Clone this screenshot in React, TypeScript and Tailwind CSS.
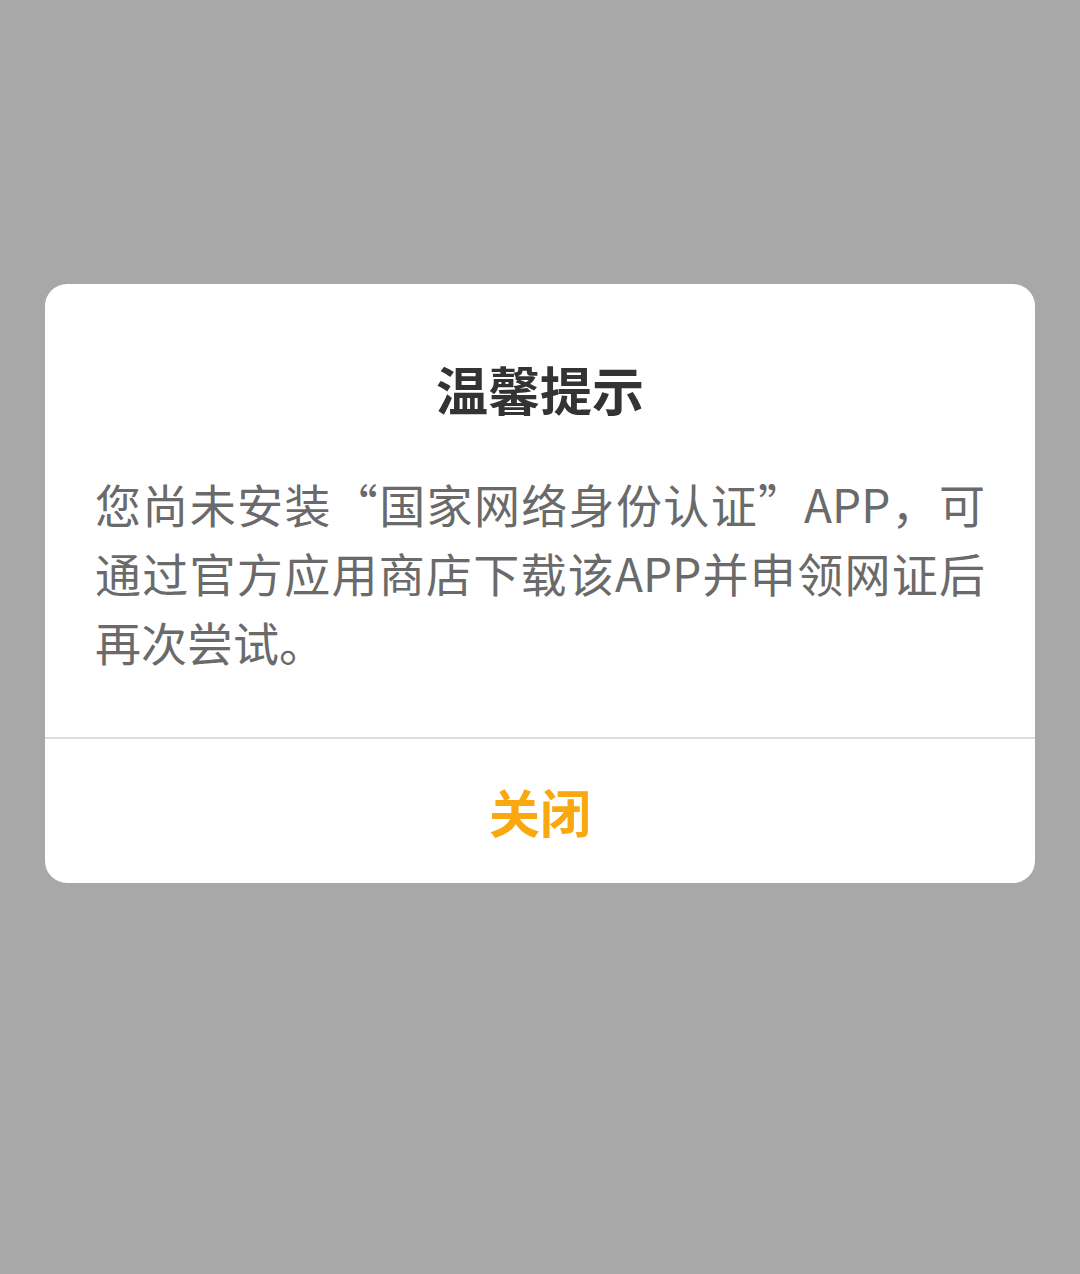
export default function App() {
  return (
    <div
      className="min-h-[1274px] w-full bg-[#a8a8a8] flex flex-col items-center pt-[284px]"
      style={{ fontFamily: '"Noto Sans CJK SC", "Noto Sans", sans-serif' }}
    >
      <div className="w-[990px] bg-white rounded-[22px] overflow-hidden flex flex-col">
        {/* Header */}
        <h2 className="pt-[75px] text-center text-[52px] leading-[60px] font-bold text-[#333333]">
          温馨提示
        </h2>

        {/* Message */}
        <p className="mt-[50px] mb-[61px] px-[50px] text-[46px] leading-[69px] text-[#6a6a6a] text-justify">
          您尚未安装“国家网络身份认证”APP，可通过官方应用商店下载该APP并申领网证后再次尝试。
        </p>

        {/* Action */}
        <div className="border-t-2 border-[#dddddd]">
          <button className="w-full h-[144px] flex items-center justify-center text-[51px] font-bold text-[#f9a80f]">
            关闭
          </button>
        </div>
      </div>
    </div>
  );
}
